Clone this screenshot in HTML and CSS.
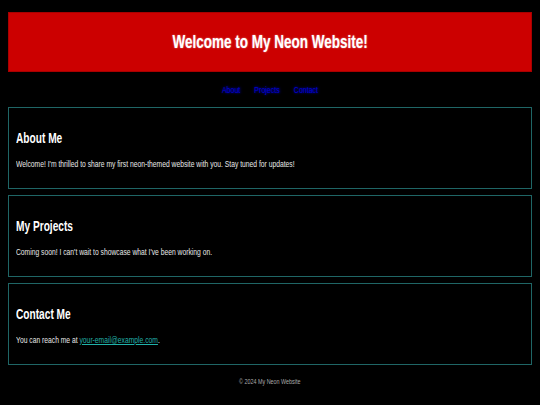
FILE: index.html
```html
<!DOCTYPE html>
<html>
<head>
<meta charset="utf-8">
<link rel="stylesheet" href="styles.css">
</head>
<body>
<header class="site-header">
  <h1 class="site-title">Welcome to My Neon Website!</h1>
</header>
<nav class="site-nav">
  <a href="#about">About</a>
  <a href="#projects">Projects</a>
  <a href="#contact">Contact</a>
</nav>
<main class="content">
  <section class="card" id="about">
    <h2 class="card-title">About Me</h2>
    <p class="card-text">Welcome! I'm thrilled to share my first neon-themed website with you. Stay tuned for updates!</p>
  </section>
  <section class="card" id="projects">
    <h2 class="card-title">My Projects</h2>
    <p class="card-text">Coming soon! I can't wait to showcase what I've been working on.</p>
  </section>
  <section class="card" id="contact">
    <h2 class="card-title">Contact Me</h2>
    <p class="card-text">You can reach me at <a class="mail" href="mailto:your-email@example.com">your-email@example.com</a>.</p>
  </section>
</main>
<footer class="site-footer"><span class="footer-text">© 2024 My Neon Website</span></footer>
</body>
</html>
```
FILE: styles.css
```css
html, body {
  background: #000;
}
body {
  margin: 0;
  padding: 12px 8px 0 8px;
  font-family: "Liberation Sans", Arial, sans-serif;
  color: #fff;
}
.site-header {
  background: #cc0000;
  height: 60px;
  box-sizing: border-box;
  border: 1px solid #a80000;
  display: flex;
  align-items: center;
  justify-content: center;
}
.site-title {
  margin: 0;
  font-size: 18px;
  line-height: 22px;
  font-weight: bold;
  color: #fff;
  text-shadow: 0 0 2px rgba(255,255,255,0.6);
  transform: scaleX(0.75);
  white-space: nowrap;
}
.site-nav {
  display: flex;
  justify-content: center;
  gap: 19px;
  height: 35px;
  align-items: center;
  transform: scaleX(0.74);
}
.site-nav a {
  color: #0000d0;
  text-decoration: none;
  font-size: 9.5px;
  text-shadow: 0 0 3px #0000ff;
}
.content {
  display: flex;
  flex-direction: column;
  gap: 6px;
}
.card {
  border: 1px solid #1f6666;
  height: 82px;
  box-sizing: border-box;
  padding: 22px 7px 0 7px;
}
.card-title {
  margin: 0;
  font-size: 14.5px;
  line-height: 16px;
  font-weight: bold;
  color: #fff;
  transform: scaleX(0.7);
  transform-origin: left center;
  white-space: nowrap;
}
.card-text {
  margin: 12px 0 0 0;
  font-size: 9.5px;
  line-height: 11px;
  color: #e8e8e8;
  transform: scaleX(0.71);
  transform-origin: left center;
  white-space: nowrap;
}
.mail {
  color: #20b2aa;
}
.site-footer {
  text-align: center;
  font-size: 7.5px;
  color: #aaa;
  padding-top: 12px;
}
.footer-text {
  display: inline-block;
  transform: scaleX(0.72);
}
```
